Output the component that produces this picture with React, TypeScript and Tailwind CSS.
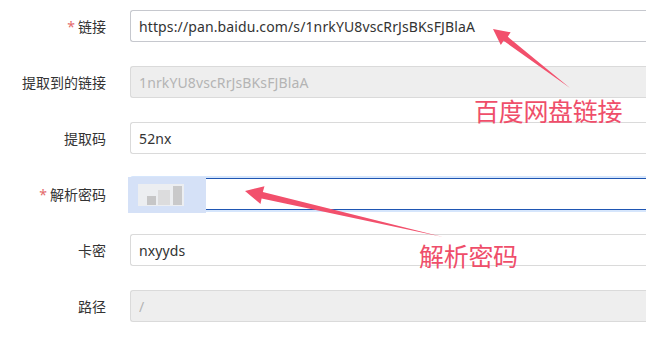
import React from "react";

interface FieldRow {
  label: string;
  value: string;
  required?: boolean;
  disabled?: boolean;
  focused?: boolean;
  hovered?: boolean;
}

const ROWS: FieldRow[] = [
  { label: "链接", value: "https://pan.baidu.com/s/1nrkYU8vscRrJsBKsFJBlaA", required: true, hovered: true },
  { label: "提取到的链接", value: "1nrkYU8vscRrJsBKsFJBlaA", disabled: true },
  { label: "提取码", value: "52nx" },
  { label: "解析密码", value: "", required: true, focused: true },
  { label: "卡密", value: "nxyyds" },
  { label: "路径", value: "/", disabled: true },
];

const FONT = "font-['Microsoft_YaHei','Noto_Sans','Noto_Sans_CJK_SC',sans-serif]";

const inputClass = (row: FieldRow) => {
  if (row.focused)
    return "w-full h-full px-[8px] rounded-l-[3px] border border-r-0 border-[#1f56b3] shadow-[0_-2px_0_0_#d6e6fc,0_2px_0_0_#d6e6fc] bg-white text-[14px] text-[#333] outline-none";
  if (row.disabled)
    return "w-full h-full px-[8px] rounded-l-[3px] border border-r-0 border-[#dadada] bg-[#eeeeee] text-[14px] tracking-[0.12px] text-[#b4b4b4] outline-none";
  if (row.hovered)
    return "w-full h-full px-[8px] rounded-l-[3px] border border-r-0 border-[#c6c8ce] bg-white text-[14px] tracking-[0.12px] text-[#333] outline-none";
  return "w-full h-full px-[8px] rounded-l-[3px] border border-r-0 border-[#dadada] bg-white text-[14px] tracking-[0.12px] text-[#333] outline-none";
};

const Field: React.FC<{ row: FieldRow }> = ({ row }) => (
  <div className="flex items-center h-[32px] gap-[24px]">
    <label className="w-[106px] shrink-0 text-right text-[14px] text-[#333]">
      {row.required && <span className="text-[#e36a6a] mr-[3px]">*</span>}
      {row.label}
    </label>
    {/* inputs run past the right edge of the crop */}
    <div className="flex-1 min-w-0 relative h-full">
      <input readOnly value={row.value} disabled={row.disabled} className={inputClass(row)} />
      {row.focused && (
        // mosaic covering the typed password
        <div className="absolute left-[-2px] top-[-1px] w-[78px] h-[36px] bg-[#d5e1f7] px-[10px] py-[7px]">
          <div className="flex items-end h-full w-[46px] bg-[#eceef1] pl-[9px] pb-[1px] gap-[2px]">
            <div className="w-[9px] h-[9px] bg-[#c6c6c7]" />
            <div className="w-[12px] h-[15px] bg-[#dcdcdd]" />
            <div className="w-[9px] h-[19px] bg-[#c9c9ca] ml-[1px]" />
          </div>
        </div>
      )}
    </div>
  </div>
);

export default function App() {
  return (
    <div className={`relative w-[646px] h-[344px] overflow-hidden bg-white ${FONT}`}>
      <div className="pt-[10px] flex flex-col gap-[24px]">
        {ROWS.map((row) => (
          <Field key={row.label} row={row} />
        ))}
      </div>

      {/* annotation arrows */}
      <svg className="absolute left-0 top-0" width="646" height="344" viewBox="0 0 646 344">
        <polygon
          fill="#f2506c"
          points="493,29 510.6,32.3 507.8,36.8 570,88 503.6,40.8 500.8,45.1"
        />
        <polygon
          fill="#f2506c"
          points="245,191 264.5,186.3 262.8,191.9 443,237 261.6,198.4 260.5,203.9"
        />
      </svg>
      <span className="absolute left-[474px] top-[96px] text-[25px] leading-[30px] text-[#ef4e6a] tracking-[-0.3px]">
        百度网盘链接
      </span>
      <span className="absolute left-[419px] top-[241px] text-[25px] leading-[30px] text-[#ef4e6a] tracking-[-0.3px]">
        解析密码
      </span>
    </div>
  );
}
